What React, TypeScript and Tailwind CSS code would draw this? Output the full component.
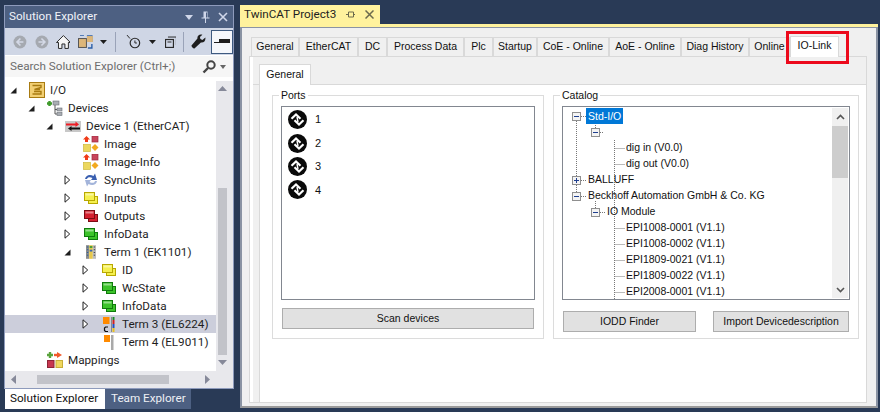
import React from "react";

const Arrow = ({ open }: { open?: boolean }) =>
  open ? (
    <svg width="7" height="7" viewBox="0 0 7 7"><path d="M6.5 0.5V6.5H0.5Z" fill="#1e1e1e" /></svg>
  ) : (
    <svg width="7" height="10" viewBox="0 0 7 10"><path d="M1 .8L5.7 5L1 9.2Z" fill="#fff" stroke="#1e1e1e" /></svg>
  );

const IoIcon = () => (
  <svg width="16" height="16" viewBox="0 0 16 16">
    <rect x=".5" y=".5" width="15" height="15" fill="#f2cf73" stroke="#a87b12" />
    <path d="M3.5 3.5H12V5.5L5.5 7.5H11M3.5 12H12V9.5H5" fill="none" stroke="#a87b12" strokeWidth="1.4" />
  </svg>
);

const DevicesIcon = () => (
  <svg width="16" height="16" viewBox="0 0 16 16">
    <path d="M2.5 1V6M0 3.5H5" stroke="#3f9a2b" strokeWidth="2.4" />
    <rect x="6" y="1" width="6" height="4" fill="#a9adb3" stroke="#6b7077" strokeWidth=".6" />
    <path d="M8 5V14M8 9.5H10M8 14H10" stroke="#555" fill="none" />
    <rect x="10" y="8" width="5" height="3" fill="#a9adb3" stroke="#6b7077" strokeWidth=".6" />
    <rect x="10" y="12.5" width="5" height="3" fill="#a9adb3" stroke="#6b7077" strokeWidth=".6" />
  </svg>
);

const DeviceIcon = () => (
  <svg width="16" height="16" viewBox="0 0 16 16">
    <rect x="0" y="3" width="16" height="11" fill="#c8c8c8" />
    <path d="M1 6.5H12" stroke="#ee1c25" strokeWidth="2" />
    <path d="M10.5 3.5L14 6.5L10.5 9Z" fill="#ee1c25" />
    <path d="M5 10.5H15" stroke="#111" strokeWidth="2" />
    <path d="M6.5 8L3 10.5L6.5 13Z" fill="#111" />
  </svg>
);

const ImageIcon = () => (
  <svg width="16" height="16" viewBox="0 0 16 16">
    <path d="M3.5 0L7 3.5H5V6H2V3.5H0Z" fill="#f03a17" />
    <rect x="9" y="0" width="6" height="6" fill="#c8455c" stroke="#9c2b40" strokeWidth=".7" />
    <rect x="0.5" y="8.5" width="7" height="7" fill="#ecd75e" stroke="#cdb93c" strokeWidth=".7" />
    <path d="M12 8L15.5 11.5L12 15L8.5 11.5Z" fill="#f2a91f" />
  </svg>
);

const SyncIcon = () => (
  <svg width="16" height="16" viewBox="0 0 16 16">
    <path d="M2 7C2.5 3.5 6.5 1.5 10.5 4L12 1.5L14 8H8L9.5 6C7 4.5 4.5 5 4 7Z" fill="#3a5fb0" />
    <path d="M14 9C13.5 12.5 9.5 14.5 5.5 12L4 14.5L2 8H8L6.5 10C9 11.5 11.5 11 12 9Z" fill="#a3b4da" />
  </svg>
);

const Stack = ({ fill, stroke }: { fill: string; stroke: string }) => (
  <svg width="14" height="12" viewBox="0 0 14 12">
    <rect x="4.5" y="4.5" width="9" height="7" fill={fill} stroke={stroke} />
    <rect x=".5" y=".5" width="10" height="8" fill={fill} stroke={stroke} />
    <rect x="1.5" y="1.5" width="8" height="2" fill="#ffffff" opacity=".45" />
  </svg>
);

const TermIcon = () => (
  <svg width="10" height="14" viewBox="0 0 11 15">
    <rect x="0" y="0" width="3.5" height="15" fill="#8c8c8c" />
    <rect x="3.5" y="0" width="4" height="15" fill="#e7c84b" />
    <rect x="7.5" y="0" width="3.5" height="15" fill="#bdbdbd" />
    <path d="M1 2H2.5M1 5H2.5M1 8H2.5M1 11H2.5" stroke="#1d5a9e" />
    <path d="M8.5 2H10M8.5 5H10M8.5 8H10M8.5 11H10" stroke="#35363a" />
    <rect x="4" y="1" width="3" height="2" fill="#3d9b3a" />
    <rect x="4" y="5" width="3" height="2" fill="#3c68b5" />
  </svg>
);

const Term3Icon = () => (
  <svg width="12" height="15" viewBox="0 0 12 15">
    <rect x="0" y="0" width="6.5" height="7" fill="#ff8a00" />
    <path d="M8.5 0V15" stroke="#888" strokeWidth="1" />
    <path d="M10.5 0V3" stroke="#1e8a2a" strokeWidth="2" />
    <path d="M10.5 3V7" stroke="#d02020" strokeWidth="2" />
    <path d="M10.5 7V11" stroke="#2050c0" strokeWidth="2" />
    <path d="M10.5 11V15" stroke="#e8c020" strokeWidth="2" />
    <path d="M5 10H2.5L1.5 11V13.5L2.5 14.5H5" fill="none" stroke="#111" strokeWidth="1.2" />
  </svg>
);

const Term4Icon = () => (
  <svg width="10" height="15" viewBox="0 0 10 15">
    <rect x="0" y="0" width="6" height="7" fill="#ff8a00" />
    <rect x="7" y="0" width="2.5" height="15" fill="#a9a9a9" />
  </svg>
);

const MappingsIcon = () => (
  <svg width="16" height="16" viewBox="0 0 16 16">
    <path d="M3 0V6M0 3H6" stroke="#5aa33c" strokeWidth="2.4" />
    <path d="M7 3H11" stroke="#f0592a" strokeWidth="2.4" />
    <path d="M10 0L15 3L10 6Z" fill="#f0592a" />
    <rect x=".5" y="8.5" width="6.5" height="7" fill="#c8374f" stroke="#8d2437" />
    <rect x="9" y="8.5" width="6.5" height="7" fill="#f0d75e" stroke="#c8ae38" />
  </svg>
);

const Caret = () => (
  <svg width="7" height="4" viewBox="0 0 7 4"><path d="M0 0H7L3.5 4Z" fill="#1e1e1e" /></svg>
);

const NavCircle = ({ dir }: { dir: "l" | "r" }) => (
  <svg width="14" height="14" viewBox="0 0 14 14">
    <circle cx="7" cy="7" r="6.5" fill="#a5a9b0" />
    <path d={dir === "l" ? "M7.5 3.5L4 7L7.5 10.5M4.5 7H10.5" : "M6.5 3.5L10 7L6.5 10.5M9.5 7H3.5"} fill="none" stroke="#d4d9e6" strokeWidth="1.6" />
  </svg>
);

const PortIcon = () => (
  <svg width="19" height="19" viewBox="0 0 19 19">
    <circle cx="9.5" cy="9.5" r="9.5" fill="#0a0a0a" />
    <path d="M3.5 8.8L8 4.5L12.5 8.8M6.5 10.2L11 14.5L15.5 10.2" fill="none" stroke="#fff" strokeWidth="2.2" />
    <path d="M9 7L10 12" stroke="#fff" strokeWidth="1.4" />
  </svg>
);

type TreeRow = {
  label: string;
  depth: number;
  arrow?: "open" | "closed";
  icon: React.ReactNode;
  selected?: boolean;
};

const treeRows: TreeRow[] = [
  { label: "I/O", depth: 0, arrow: "open", icon: <IoIcon /> },
  { label: "Devices", depth: 1, arrow: "open", icon: <DevicesIcon /> },
  { label: "Device 1 (EtherCAT)", depth: 2, arrow: "open", icon: <DeviceIcon /> },
  { label: "Image", depth: 3, icon: <ImageIcon /> },
  { label: "Image-Info", depth: 3, icon: <ImageIcon /> },
  { label: "SyncUnits", depth: 3, arrow: "closed", icon: <SyncIcon /> },
  { label: "Inputs", depth: 3, arrow: "closed", icon: <Stack fill="#f5f04f" stroke="#b8a800" /> },
  { label: "Outputs", depth: 3, arrow: "closed", icon: <Stack fill="#d5202f" stroke="#7c0c14" /> },
  { label: "InfoData", depth: 3, arrow: "closed", icon: <Stack fill="#3cc32a" stroke="#0f7a0c" /> },
  { label: "Term 1 (EK1101)", depth: 3, arrow: "open", icon: <TermIcon /> },
  { label: "ID", depth: 4, arrow: "closed", icon: <Stack fill="#f5f04f" stroke="#b8a800" /> },
  { label: "WcState", depth: 4, arrow: "closed", icon: <Stack fill="#3cc32a" stroke="#0f7a0c" /> },
  { label: "InfoData", depth: 4, arrow: "closed", icon: <Stack fill="#3cc32a" stroke="#0f7a0c" /> },
  { label: "Term 3 (EL6224)", depth: 4, arrow: "closed", icon: <Term3Icon />, selected: true },
  { label: "Term 4 (EL9011)", depth: 4, icon: <Term4Icon /> },
  { label: "Mappings", depth: 1, icon: <MappingsIcon /> },
];

const mainTabs = [
  { label: "General", w: "w-[48px]" },
  { label: "EtherCAT", w: "w-[59px]" },
  { label: "DC", w: "w-[29px]" },
  { label: "Process Data", w: "w-[77px]" },
  { label: "Plc", w: "w-[29px]" },
  { label: "Startup", w: "w-[44px]" },
  { label: "CoE - Online", w: "w-[72px]" },
  { label: "AoE - Online", w: "w-[72px]" },
  { label: "Diag History", w: "w-[68px]" },
  { label: "Online", w: "w-[41px]" },
];

const catalogRows = [
  { label: "Std-I/O", pad: "pl-[23px]", selected: true },
  { label: "", pad: "pl-[23px]" },
  { label: "dig in (V0.0)", pad: "pl-[63px]" },
  { label: "dig out (V0.0)", pad: "pl-[63px]" },
  { label: "BALLUFF", pad: "pl-[25px]" },
  { label: "Beckhoff Automation GmbH & Co. KG", pad: "pl-[25px]" },
  { label: "IO Module", pad: "pl-[44px]" },
  { label: "EPI1008-0001 (V1.1)", pad: "pl-[63px]" },
  { label: "EPI1008-0002 (V1.1)", pad: "pl-[63px]" },
  { label: "EPI1809-0021 (V1.1)", pad: "pl-[63px]" },
  { label: "EPI1809-0022 (V1.1)", pad: "pl-[63px]" },
  { label: "EPI2008-0001 (V1.1)", pad: "pl-[63px]" },
];

const TreeBox = ({ x, y, open }: { x: number; y: number; open: boolean }) => (
  <g>
    <rect x={x + 0.5} y={y + 0.5} width="8" height="8" fill="#f4f4f4" stroke="#8f8f8f" />
    <path d={`M${x + 2} ${y + 4.5}H${x + 7}`} stroke="#1f3f8f" />
    {!open && <path d={`M${x + 4.5} ${y + 2}V${y + 7}`} stroke="#1f3f8f" />}
  </g>
);

// dotted connector lines and +/- boxes of the catalog tree
const CatalogLines = () => (
  <svg className="absolute left-0 top-0" width="270" height="192" viewBox="0 0 270 192">
    <g stroke="#777" strokeDasharray="1 1" fill="none">
      <path d="M13.5 14V88M18 9.5H23M37 25.5H41" />
      <path d="M32.5 14V21M32.5 94V102" />
      <path d="M51.5 33V192" />
      <path d="M51.5 41.5H62M51.5 57.5H62M51.5 121.5H62M51.5 137.5H62M51.5 153.5H62M51.5 169.5H62M51.5 185.5H62" />
      <path d="M18 73.5H23M18 89.5H23M37 105.5H42" />
    </g>
    <TreeBox x={9} y={5} open />
    <TreeBox x={28} y={21} open />
    <TreeBox x={9} y={69} open={false} />
    <TreeBox x={9} y={85} open />
    <TreeBox x={28} y={101} open />
  </svg>
);

const SolutionExplorer = () => (
  <div className="w-[230px] flex flex-col shrink-0 font-['Roboto',sans-serif] text-[11.7px]">
    <div className="h-[383px] flex flex-col border-x border-t border-[#8e9bbc] bg-white">
      <div className="h-[22px] bg-[#4d6082] text-[#f0f3f9] flex items-center pl-[4px] pr-[5px] shrink-0">
        <span className="flex-1">Solution Explorer</span>
        <div className="flex items-center gap-[8px] text-[#ccd5f0]">
          <svg width="8" height="5" viewBox="0 0 8 5"><path d="M0 0H8L4 5Z" fill="#d0d7ea" /></svg>
          <svg width="9" height="12" viewBox="0 0 9 12"><path d="M2.5 .5H6.5V6.5H8.5V7.5H5V12H4V7.5H.5V6.5H2.5ZM5 1.5V6.5H6V1.5Z" fill="#d0d7ea" /></svg>
          <svg width="10" height="10" viewBox="0 0 10 10"><path d="M1 1L9 9M9 1L1 9" stroke="#d0d7ea" strokeWidth="1.6" /></svg>
        </div>
      </div>
      <div className="h-[27px] bg-[#cfd6e5] flex items-center pl-[8px] shrink-0">
        <NavCircle dir="l" />
        <span className="w-[8px]" />
        <NavCircle dir="r" />
        <span className="w-[7px]" />
        <svg width="15" height="14" viewBox="0 0 15 14"><path d="M7.5 .5L14.5 7.5H12.5V13.5H9V9H6V13.5H2.5V7.5H.5Z" fill="#f5f5f5" stroke="#2a2a2a" /></svg>
        <span className="w-[8px]" />
        <svg width="16" height="14" viewBox="0 0 16 14">
          <rect x="0.5" y="3.5" width="8" height="9" fill="#dcb67a" stroke="#555" />
          <path d="M9 1H14V7" fill="none" stroke="#2b5fa8" strokeWidth="1.4" />
          <rect x="9" y="1" width="6" height="6" fill="#dcb67a" />
          <path d="M2 0H6M14 9V13H10" stroke="#2b5fa8" strokeWidth="1.4" fill="none" />
        </svg>
        <span className="w-[6px]" />
        <Caret />
        <span className="w-[8px]" />
        <span className="w-px h-[20px] bg-[#9aa3b8]" />
        <span className="w-[10px]" />
        <svg width="15" height="15" viewBox="0 0 15 15">
          <circle cx="9" cy="9" r="4.8" fill="none" stroke="#2a2a2a" strokeWidth="1.2" />
          <path d="M9 6.5V9H11M1 1L4 4.5" fill="none" stroke="#2a2a2a" />
        </svg>
        <span className="w-[8px]" />
        <Caret />
        <span className="w-[9px]" />
        <svg width="12" height="12" viewBox="0 0 12 12" fill="none" stroke="#2a2a2a">
          <rect x=".5" y="3.5" width="8" height="8" strokeWidth="1.2" />
          <path d="M3 1H11.5V9" />
          <path d="M2.5 6H6.5" />
        </svg>
        <span className="w-[7px]" />
        <span className="w-px h-[20px] bg-[#9aa3b8]" />
        <span className="w-[7px]" />
        <svg width="15" height="15" viewBox="0 0 15 15"><path d="M14.5 3.5L11.5 6L9.5 5L9 3L11.5 .8C9 -.5 6 1.5 6.5 4.5L.5 11.5C0 12.5 2.5 15 3.5 14.5L10 8.5C13 9 15 6.5 14.5 3.5Z" fill="#1e1e1e" /></svg>
        <span className="w-[5px]" />
        <div className="w-[22px] h-[24px] bg-[#f5f7fb] border border-[#3e5a80] flex items-center justify-center">
          <svg width="16" height="6" viewBox="0 0 16 6"><path d="M5 0H16V4H0V3H5Z" fill="#1e1e1e" /></svg>
        </div>
      </div>
      <div className="h-[21px] bg-[#f6f6f6] mt-px flex items-center pl-[5px] pr-[7px] shrink-0 text-[#6d6d6d]">
        <span className="flex-1">Search Solution Explorer (Ctrl+;)</span>
        <svg width="14" height="14" viewBox="0 0 14 14"><circle cx="9" cy="5" r="3.7" fill="none" stroke="#444" strokeWidth="2" /><path d="M6 8L1.5 12.5" stroke="#444" strokeWidth="2.4" /></svg>
        <span className="w-[3px]" />
        <svg width="6" height="4" viewBox="0 0 6 4" className="ml-px"><path d="M0 0H6L3 4Z" fill="#666" /></svg>
      </div>
      <div className="flex-1 flex min-h-0 pt-[4px]">
        <div className="w-[211px] flex flex-col">
          <div className="flex-1 min-h-0 text-[#1e1e1e]">
            {treeRows.map((row) => (
              <div
                key={row.label + row.depth}
                className={`h-[18px] flex items-center ${row.selected ? "bg-[#cccedb]" : ""}`}
                style={{ paddingLeft: 5 + row.depth * 18 }}
              >
                <span className="w-[7px] flex items-center justify-center">
                  {row.arrow && <Arrow open={row.arrow === "open"} />}
                </span>
                <span className="w-[12px]" />
                <span className="w-[16px] h-[16px] flex items-center justify-center">{row.icon}</span>
                <span className="pl-[5px] mt-px whitespace-nowrap">{row.label}</span>
              </div>
            ))}
          </div>
          <div className="h-[17px] bg-[#e8e8ec] flex items-center pl-[6px] shrink-0">
            <svg width="5" height="9" viewBox="0 0 5 9"><path d="M5 0V9L0 4.5Z" fill="#868999" /></svg>
            <span className="w-[21px]" />
            <div className="w-[132px] h-[9px] bg-[#c2c3c9]" />
            <span className="w-[36px]" />
            <svg width="5" height="9" viewBox="0 0 5 9"><path d="M0 0V9L5 4.5Z" fill="#868999" /></svg>
          </div>
        </div>
        <div className="w-[17px] bg-[#e8e8ec] flex flex-col items-center pt-[5px] pr-[4px]">
          <svg width="9" height="5" viewBox="0 0 9 5"><path d="M0 5H9L4.5 0Z" fill="#868999" /></svg>
          <div className="w-[9px] h-[167px] bg-[#c2c3c9] mt-[97px]" />
          <svg width="9" height="5" viewBox="0 0 9 5" className="mt-[5px]"><path d="M0 0H9L4.5 5Z" fill="#868999" /></svg>
        </div>
      </div>
    </div>
    <div className="h-[21px] flex border-t border-[#8e9bbc]">
      <div className="w-[100px] ml-px bg-white text-[#111] pl-[5px] flex items-center">Solution Explorer</div>
      <div className="w-[86px] bg-[#4d6082] text-[#eef0f5] pl-[6px] flex items-center">Team Explorer</div>
    </div>
  </div>
);

const BevelButton = ({ children, className }: { children: string; className: string }) => (
  <div className={`bg-[#e1e1e1] border border-[#adadad] flex items-center justify-center text-[#111] ${className}`}>
    {children}
  </div>
);

const Group = ({ title, className, children }: { title: string; className: string; children: React.ReactNode }) => (
  <fieldset className={`border border-[#dcdcdc] h-[251px] shrink-0 ${className}`}>
    <legend className="ml-[6px] px-[2px] h-[14px] leading-[14px]">{title}</legend>
    {children}
  </fieldset>
);

const TwinCatPanel = () => (
  <div className="flex-1 flex flex-col min-w-0 pl-[6px] font-['Liberation_Sans',sans-serif] text-[10.5px] text-[#111]">
    <div className="h-[19px] w-[140px] bg-[#fff29d] flex items-center pl-[4px] font-['Roboto',sans-serif] text-[11.7px] text-[#1e1e1e]">
      <span>TwinCAT Project3</span>
      <svg width="9" height="9" viewBox="0 0 9 9" className="ml-[10px]"><path d="M0 4.5H2.5M2.5 2V7H7.5V2ZM7.5 4.5H9" fill="none" stroke="#6b6a4d" /></svg>
      <svg width="9" height="9" viewBox="0 0 9 9" className="ml-[10px]"><path d="M.5 .5L8.5 8.5M8.5 .5L.5 8.5" stroke="#6b6a4d" strokeWidth="1.5" /></svg>
    </div>
    <div className="h-[3px] bg-[#fff29d] shrink-0" />
    <div className="h-[381px] flex flex-col bg-[#f0f0f0] border-2 border-t border-[#8a93a3] border-b-[#9a9a9a] pl-[1px] relative">
      <div className="h-[28px] pt-[9px] flex pl-[8px] shrink-0 items-end relative">
        {mainTabs.map((tab) => (
          <div
            key={tab.label}
            className={`${tab.w} h-[19px] border border-b-0 border-[#d9d9d9] flex items-center justify-center whitespace-nowrap`}
          >
            {tab.label}
          </div>
        ))}
        <div className="w-[49px] h-[21px] bg-white border border-b-0 border-[#d9d9d9] flex items-center justify-center pb-[3px] -mb-px z-10 text-[#111]">
          IO-Link
        </div>
      </div>
      <div className="ml-[6px] mr-[9px] flex-1 min-h-0 mb-[3px] bg-white border border-[#d9d9d9] pl-[3px] flex">
        <div className="flex-1 flex flex-col min-w-0">
          <div className="h-[28px] bg-[#f0f0f0] shrink-0 flex items-end pl-[6px] border-b border-[#d9d9d9]">
            <div className="w-[52px] h-[21px] bg-white border border-b-0 border-[#d9d9d9] flex items-center justify-center -mb-px">
              General
            </div>
          </div>
          <div className="flex-1 flex min-h-0">
            <div className="w-[7px] bg-[#f0f0f0] border-r border-[#d9d9d9] shrink-0" />
            <div className="flex-1 flex gap-[9px] pl-[12px] pt-[3px]">
              <Group title="Ports" className="w-[272px]">
                <div className="mx-[8px] mt-[4px] h-[194px] border border-[#828790] pt-[1px] pl-[6px]">
                  {["1", "2", "3", "4"].map((port) => (
                    <div key={port} className="h-[23.4px] flex items-center gap-[8px] text-[11px]">
                      <PortIcon />
                      <span>{port}</span>
                    </div>
                  ))}
                </div>
                <BevelButton className="mx-[9px] mt-[8px] h-[21px]">Scan devices</BevelButton>
              </Group>
              <Group title="Catalog" className="w-[306px]">
                <div className="mx-[8px] mt-[4px] h-[194px] border border-[#828790] flex relative">
                  <CatalogLines />
                  <div className="flex-1 pt-px relative">
                    {catalogRows.map((row, i) => (
                      <div key={i} className={`h-[16px] flex items-center whitespace-nowrap ${row.pad}`}>
                        {row.selected ? <span className="bg-[#0078d7] text-white px-[2px] h-[16px] leading-[16px]">{row.label}</span> : row.label}
                      </div>
                    ))}
                  </div>
                  <div className="w-[16px] my-px mr-px bg-[#f0f0f0] flex flex-col items-center">
                    <svg width="9" height="6" viewBox="0 0 9 6" className="mt-[6px]"><path d="M1 5L4.5 1.5L8 5" fill="none" stroke="#555" strokeWidth="1.6" /></svg>
                    <div className="w-full h-[52px] bg-[#cdcdcd] mt-[6px]" />
                    <svg width="9" height="6" viewBox="0 0 9 6" className="mt-auto mb-[5px]"><path d="M1 1L4.5 4.5L8 1" fill="none" stroke="#555" strokeWidth="1.6" /></svg>
                  </div>
                </div>
                <div className="flex justify-between mx-[9px] mt-[11px]">
                  <BevelButton className="w-[133px] h-[21px]">IODD Finder</BevelButton>
                  <BevelButton className="w-[136px] h-[21px]">Import Devicedescription</BevelButton>
                </div>
              </Group>
            </div>
          </div>
        </div>
      </div>
      {/* red annotation around the IO-Link tab */}
      <div className="absolute left-[544px] top-[3px] w-[63px] h-[33px] border-[3px] border-[#ec0a1c] z-20" />
    </div>
  </div>
);

export default function App() {
  return (
    <div className="w-[880px] h-[412px] bg-[#293a56] flex pt-[5px] pl-[4px] pr-[2px] overflow-hidden">
      <SolutionExplorer />
      <TwinCatPanel />
    </div>
  );
}
